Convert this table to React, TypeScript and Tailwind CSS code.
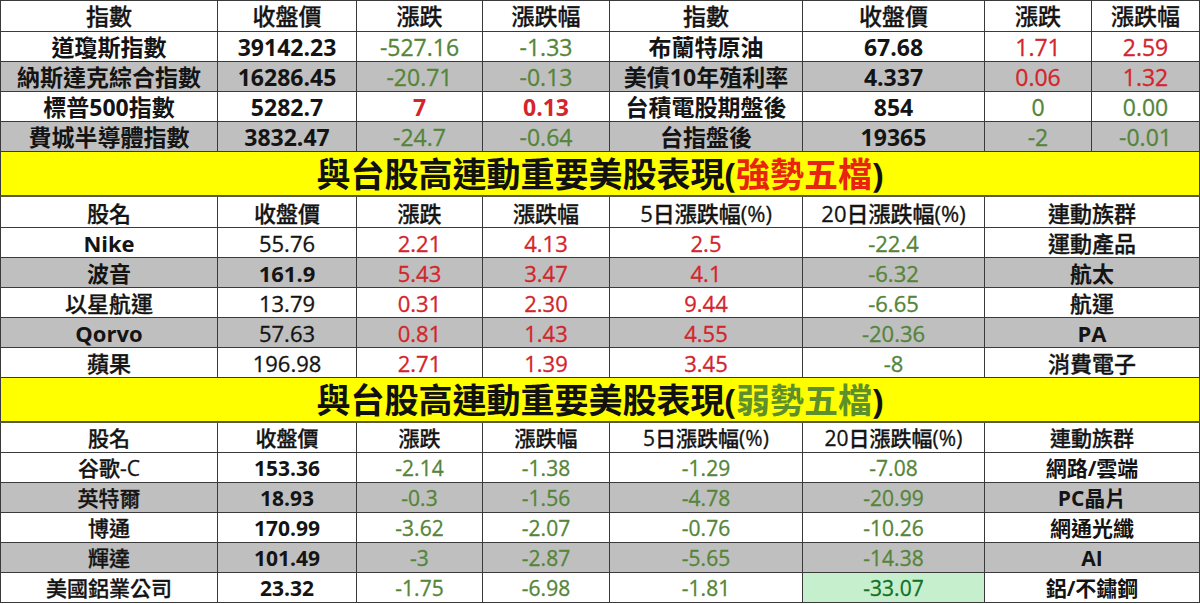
import clsx from "clsx";

type Tone = "r" | "g" | "k";

interface CellData {
  text: string;
  tone?: Tone;
  bold?: boolean;
  hl?: boolean;
}

const TOP_COLS = "grid-cols-[218px_139px_126px_127px_193px_182px_107px_108px]";
const MID_COLS = "grid-cols-[218px_139px_126px_127px_193px_182px_215px]";

const toneClass = (t?: Tone) =>
  t === "r" ? "text-[#d3252b]" : t === "g" ? "text-[#54853a]" : "text-[#141414]";

// helpers to keep the data short
const k = (text: string, bold = false): CellData => ({ text, tone: "k", bold });
const r = (text: string, bold = false): CellData => ({ text, tone: "r", bold });
const g = (text: string): CellData => ({ text, tone: "g" });

const topHeader = ["指數", "收盤價", "漲跌", "漲跌幅", "指數", "收盤價", "漲跌", "漲跌幅"];
const topRows: CellData[][] = [
  [k("道瓊斯指數", true), k("39142.23", true), g("-527.16"), g("-1.33"), k("布蘭特原油", true), k("67.68", true), r("1.71"), r("2.59")],
  [k("納斯達克綜合指數", true), k("16286.45", true), g("-20.71"), g("-0.13"), k("美債10年殖利率", true), k("4.337", true), r("0.06"), r("1.32")],
  [k("標普500指數", true), k("5282.7", true), r("7", true), r("0.13", true), k("台積電股期盤後", true), k("854", true), g("0"), g("0.00")],
  [k("費城半導體指數", true), k("3832.47", true), g("-24.7"), g("-0.64"), k("台指盤後", true), k("19365", true), g("-2"), g("-0.01")],
];

const stockHeader = ["股名", "收盤價", "漲跌", "漲跌幅", "5日漲跌幅(%)", "20日漲跌幅(%)", "連動族群"];

const strongRows: CellData[][] = [
  [k("Nike", true), k("55.76"), r("2.21"), r("4.13"), r("2.5"), g("-22.4"), k("運動產品")],
  [k("波音", true), k("161.9", true), r("5.43"), r("3.47"), r("4.1"), g("-6.32"), k("航太", true)],
  [k("以星航運"), k("13.79"), r("0.31"), r("2.30"), r("9.44"), g("-6.65"), k("航運")],
  [k("Qorvo", true), k("57.63"), r("0.81"), r("1.43"), r("4.55"), g("-20.36"), k("PA", true)],
  [k("蘋果"), k("196.98"), r("2.71"), r("1.39"), r("3.45"), g("-8"), k("消費電子")],
];

const weakRows: CellData[][] = [
  [k("谷歌-C"), k("153.36", true), g("-2.14"), g("-1.38"), g("-1.29"), g("-7.08"), k("網路/雲端", true)],
  [k("英特爾"), k("18.93", true), g("-0.3"), g("-1.56"), g("-4.78"), g("-20.99"), k("PC晶片", true)],
  [k("博通"), k("170.99", true), g("-3.62"), g("-2.07"), g("-0.76"), g("-10.26"), k("網通光纖", true)],
  [k("輝達"), k("101.49", true), g("-3"), g("-2.87"), g("-5.65"), g("-14.38"), k("AI", true)],
  [k("美國鋁業公司"), k("23.32", true), g("-1.75"), g("-6.98"), g("-1.81"), { text: "-33.07", hl: true }, k("鋁/不鏽鋼", true)],
];

const Row = ({
  cols,
  cells,
  gray,
  size,
  tall,
}: {
  cols: string;
  cells: CellData[];
  gray?: boolean;
  size: string;
  tall?: boolean;
}) => (
  <div className={clsx("grid", cols, tall ? "h-[31px]" : "h-[30px]", gray ? "bg-[#bfbfbf]" : "bg-white")}>
    {cells.map((c, i) => (
      <div
        key={i}
        className={clsx(
          "flex items-center justify-center border-r border-b border-[#3a3a3a] leading-none whitespace-nowrap pt-px",
          i === 0 && "border-l",
          size,
          c.bold ? "font-bold" : "font-medium [-webkit-text-stroke:0.3px_currentColor]",
          c.hl ? "bg-[#c6efce] text-[#12702a]" : toneClass(c.tone)
        )}
      >
        {c.text}
      </div>
    ))}
  </div>
);

const Banner = ({ label, strong }: { label: string; strong: boolean }) => (
  <div className="h-[45px] bg-[#ffff00] border-l border-r border-b-2 border-b-[#5a5a44] border-x-[#3a3a3a] flex items-center justify-center">
    <span className="text-[34px] font-bold leading-none text-[#111]">
      與台股高連動重要美股表現(
      <span className={strong ? "text-[#e8230f]" : "text-[#5d8f2c]"}>{label}</span>)
    </span>
  </div>
);

export default function App() {
  return (
    <div
      className="w-[1200px] h-[604px] bg-white overflow-hidden"
      style={{ fontFamily: '"Open Sans", "Noto Sans CJK TC", sans-serif' }}
    >
      <div className="border-t border-[#3a3a3a]">
        <Row cols={TOP_COLS} size="text-[23px]" tall cells={topHeader.map((h) => k(h))} />
        {topRows.map((row, i) => (
          <Row key={i} cols={TOP_COLS} size="text-[23px]" gray={i % 2 === 1} cells={row} />
        ))}

        <Banner label="強勢五檔" strong />
        <Row cols={MID_COLS} size="text-[22px]" tall cells={stockHeader.map((h) => k(h))} />
        {strongRows.map((row, i) => (
          <Row key={i} cols={MID_COLS} size="text-[22px]" gray={i % 2 === 1} cells={row} />
        ))}

        <Banner label="弱勢五檔" strong={false} />
        <Row cols={MID_COLS} size="text-[21px]" cells={stockHeader.map((h) => k(h))} />
        {weakRows.map((row, i) => (
          <Row key={i} cols={MID_COLS} size="text-[21px]" gray={i % 2 === 1} cells={row} />
        ))}
      </div>
    </div>
  );
}
